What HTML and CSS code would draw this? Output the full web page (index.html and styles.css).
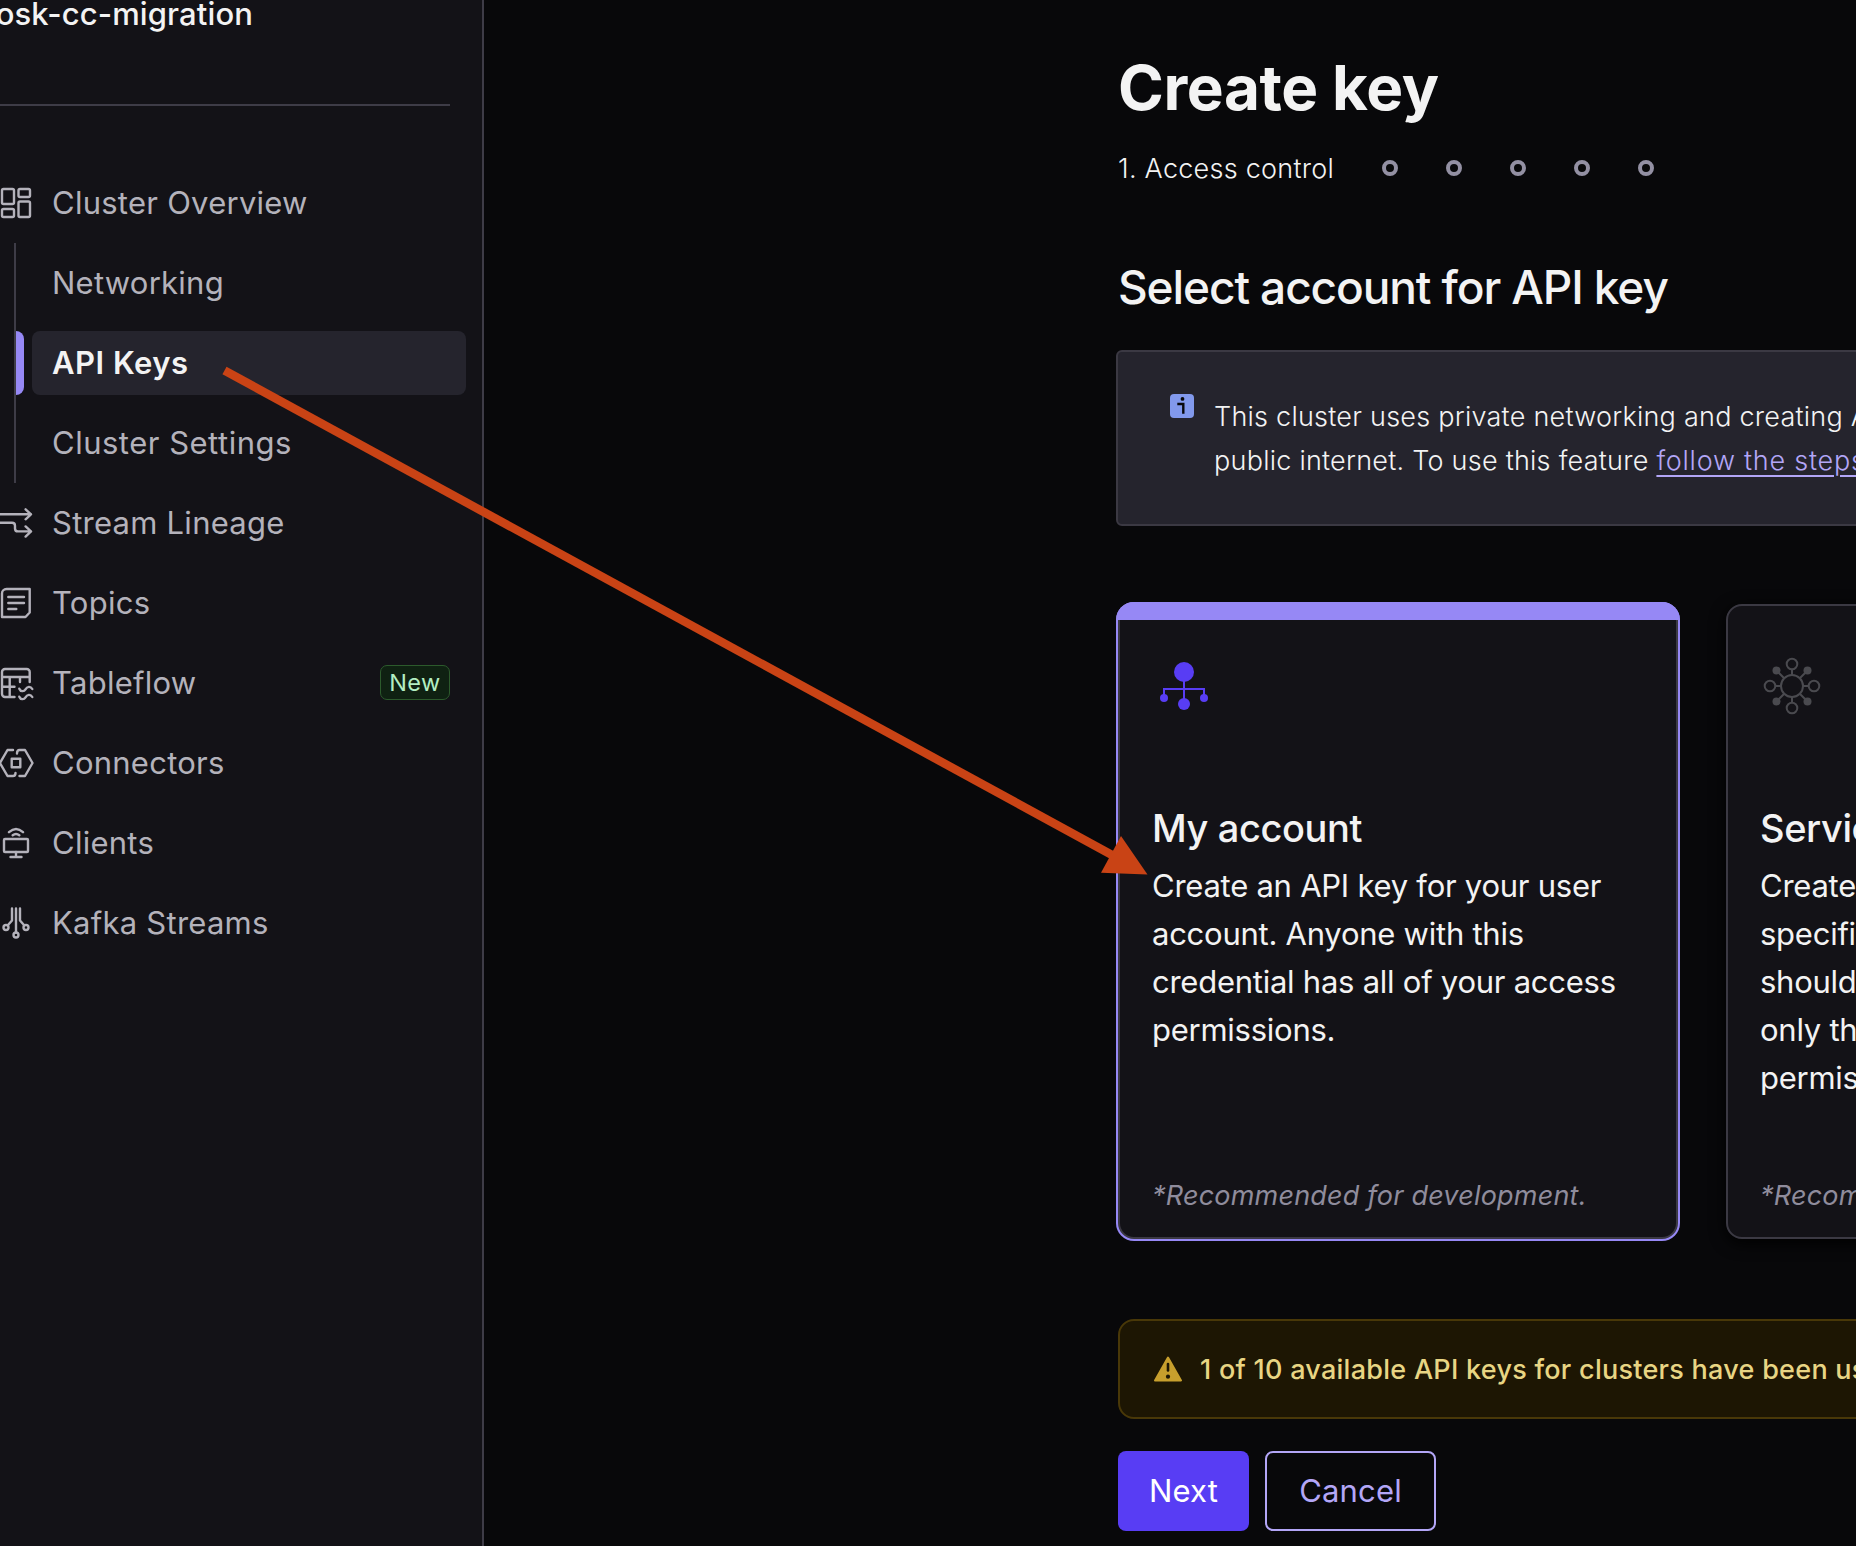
FILE: index.html
```
<!DOCTYPE html>
<html lang="en">
<head>
<meta charset="utf-8">
<title>Create key</title>
<link rel="stylesheet" href="styles.css">
</head>
<body>
<div class="app">
  <aside class="sidebar">
    <div class="cluster-name">osk-cc-migration</div>
    <hr class="divider">
    <nav class="nav">
      <a class="nav-item">
        <svg class="icon" viewBox="0 0 36 36"><rect x="4" y="4" width="12" height="15" rx="1.5"/><rect x="20.500" y="4" width="11.500" height="8" rx="1.5"/><rect x="4" y="24" width="12" height="8" rx="1.5"/><rect x="20.500" y="16.500" width="11.500" height="15.500" rx="1.5"/></svg>
        <span>Cluster Overview</span>
      </a>
      <div class="subnav">
        <a class="sub-item">Networking</a>
        <a class="sub-item active">API Keys</a>
        <a class="sub-item wide">Cluster Settings</a>
      </div>
      <a class="nav-item">
        <svg class="icon" viewBox="0 0 36 36"><path d="M0 9.300H33M27.600 4.300 33 9.300 27.600 14.300M0 17.700H14q3 0 3 3v2.700q0 3 3 3h13M27.600 21.400 33 26.400 27.600 31.600"/></svg>
        <span>Stream Lineage</span>
      </a>
      <a class="nav-item">
        <svg class="icon" viewBox="0 0 36 36"><path d="M8.500 4H31.700v23.500L27.500 32H4V8.500A4.500 4.500 0 0 1 8.500 4zM10.300 12H26M10.300 18H26M10.300 24h8"/></svg>
        <span>Topics</span>
      </a>
      <a class="nav-item">
        <svg class="icon" viewBox="0 0 36 36"><path d="M16.500 32H7a3 3 0 0 1-3-3V7a3 3 0 0 1 3-3h21.700a3 3 0 0 1 3 3v10M4 12h27.700M4 21.700h12.500M11.700 12V32M22 12v5M21.300 23.700c1.200 3 4.600 3.300 6.200.6s4.900-3.600 6.800-.3M21.300 31.700c1.200 3 4.600 3.300 6.200.6s4.900-3.600 6.800-.3"/></svg>
        <span>Tableflow</span>
        <span class="badge">New</span>
      </a>
      <a class="nav-item">
        <svg class="icon" viewBox="0 0 36 36"><path d="M15 5H9.500L2 18l7.500 13H15q2.500 0 2.500-3M19 8.500Q19 5 21.500 5h5.500L34.500 18 27 31h-5.500"/><rect x="13.700" y="13.700" width="8.600" height="8.600"/></svg>
        <span>Connectors</span>
      </a>
      <a class="nav-item">
        <svg class="icon" viewBox="0 0 36 36"><rect x="6" y="14" width="24" height="13" rx="1"/><path d="M18 27v5M12.500 32h11M11 7.200q7-6.500 14 0M14.700 10.300q3.300-2.600 6.600 0"/></svg>
        <span>Clients</span>
      </a>
      <a class="nav-item">
        <svg class="icon" viewBox="0 0 36 36"><path d="M18 3.500v24M14 3.500v12L9.800 20.300M22 3.500v12l4.200 4.800"/><circle cx="8" cy="22.500" r="2.500"/><circle cx="28" cy="22.500" r="2.500"/><circle cx="18" cy="30" r="2.500"/></svg>
        <span>Kafka Streams</span>
      </a>
    </nav>
  </aside>

  <main class="main">
    <h1 class="title">Create key</h1>
    <div class="steps">
      <span class="step-label">1. Access control</span>
      <span class="dots"><i></i><i></i><i></i><i></i><i></i></span>
    </div>
    <h2 class="subtitle">Select account for API key</h2>

    <div class="info">
      <svg class="info-icon" viewBox="0 0 24 24"><rect width="24" height="24" rx="4" fill="#8299ec"/><circle cx="12.500" cy="4.900" r="1.900" fill="#08080a"/><path d="M7.300 10h6v9.700" fill="none" stroke="#08080a" stroke-width="2.400"/></svg>
      <p>This cluster uses private networking and creating API keys<br>public internet. To use this feature <a class="link">follow the steps</a></p>
    </div>

    <div class="cards">
      <section class="card selected">
        <svg class="card-icon" viewBox="0 0 64 64"><g fill="#583df4"><circle cx="32" cy="18" r="10"/><circle cx="12" cy="44" r="4"/><circle cx="52" cy="44" r="4"/><circle cx="32" cy="50" r="6"/></g><path d="M32 18v32M12 44V35H52v9" fill="none" stroke="#583df4" stroke-width="2"/></svg>
        <h3>My account</h3>
        <p class="desc">Create an API key for your user<br>account. Anyone with this<br>credential has all of your access<br>permissions.</p>
        <p class="note">*Recommended for development.</p>
      </section>
      <section class="card">
        <svg class="card-icon" viewBox="0 0 64 64"><g fill="none" stroke="#4a4a4f" stroke-width="2"><circle cx="32" cy="32" r="11"/><circle cx="32" cy="10" r="5.300"/><circle cx="32" cy="54" r="5.300"/><circle cx="10" cy="32" r="5.300"/><circle cx="54" cy="32" r="5.300"/><path d="M32 15.300V21M32 43v5.700M15.300 32H21M43 32h5.700M16.500 16.500l7.700 7.700M39.800 39.800l7.700 7.700M47.500 16.500l-7.700 7.700M24.200 39.800l-7.700 7.700"/></g><g fill="#4a4a4f"><circle cx="16.500" cy="16.500" r="4"/><circle cx="47.500" cy="16.500" r="4"/><circle cx="16.500" cy="47.500" r="4"/><circle cx="47.500" cy="47.500" r="4"/></g></svg>
        <h3>Service account</h3>
        <p class="desc">Create an API key for a<br>specific service<br>should have<br>only the<br>permissions</p>
        <p class="note">*Recommended for production.</p>
      </section>
    </div>

    <div class="warning">
      <svg class="warning-icon" viewBox="0 0 28 26"><path d="M14 1.500 27 24.500H1z" fill="#c79f2d" stroke="#c79f2d" stroke-width="2" stroke-linejoin="round"/><path d="M14 8v6.500" stroke="#1d1603" stroke-width="2.600" stroke-linecap="round"/><circle cx="14" cy="20.700" r="2.100" fill="#1d1603"/></svg>
      <span>1 of 10 available API keys for clusters have been used</span>
    </div>

    <div class="actions">
      <button class="btn primary">Next</button>
      <button class="btn secondary">Cancel</button>
    </div>
  </main>

  <svg class="arrow" viewBox="0 0 1856 1546"><path d="M224.500 370.500 1112 855" stroke="#c94315" stroke-width="8.500"/><path d="M1121 836 1147.500 874.500 1101 872.700z" fill="#c94315"/></svg>
</div>
</body>
</html>
```
FILE: styles.css
```
* { box-sizing: border-box; }

body {
  margin: 0;
  overflow: hidden;
  background: #08080a;
  color: #f3f3f3;
  font-family: Inter, "Liberation Sans", sans-serif;
}

h1, h2, h3, p { margin: 0; }

.app {
  position: relative;
  display: flex;
  width: 1856px;
  height: 1546px;
  overflow: hidden;
}

/* Sidebar */
.sidebar {
  flex: none;
  width: 484px;
  background: #131217;
  border-right: 2px solid #3e3c47;
}

.cluster-name {
  display: flex;
  width: 253px;
  height: 28px;
  justify-content: flex-end;
  font-size: 31px;
  font-weight: 500;
  line-height: 28px;
  letter-spacing: 0.12px;
  white-space: nowrap;
}

.divider {
  width: 450px;
  height: 2px;
  margin: 76px 0 57px;
  border: 0;
  background: #3e3c47;
}

.nav { color: #b4b2bb; font-size: 31px; letter-spacing: 0.25px; }

.nav-item { display: flex; align-items: center; height: 80px; padding: 0 32px 0 0; }
.nav-item span { margin-bottom: 2px; }

.icon {
  width: 36px;
  height: 36px;
  margin: 0 18px 0 -2px;
  fill: none;
  stroke: currentColor;
  stroke-width: 2.4;
  stroke-linecap: round;
  stroke-linejoin: round;
}

.badge {
  width: 70px;
  height: 35px;
  margin-left: auto;
  border: 1px solid #2c5a2c;
  border-radius: 7px;
  background: #0f2112;
  color: #b3eec2;
  font-size: 23.5px;
  line-height: 33px;
  letter-spacing: 0.5px;
  text-align: center;
}

.subnav {
  display: flex;
  flex-direction: column;
  gap: 16px;
  height: 240px;
  margin-left: 14px;
  padding: 8px 16px;
  border-left: 2px solid #3e3c47;
}

.sub-item { display: flex; align-items: center; height: 64px; padding: 0 0 2px 20px; border-radius: 8px; }
.wide { letter-spacing: 0.5px; }

.active {
  position: relative;
  background: #25242d;
  color: #f3f3f3;
  font-weight: 600;
  letter-spacing: 0.5px;
}

.active::before {
  content: "";
  position: absolute;
  top: 0;
  left: -16px;
  width: 8px;
  height: 64px;
  border-radius: 0 8px 8px 0;
  background: #9688f5;
}

/* Main column */
.main { width: 1372px; flex: none; padding: 52px 0 0 634px; }

.title { font-size: 62px; font-weight: 700; line-height: 72px; letter-spacing: -0.4px; }

.steps { display: flex; align-items: center; height: 40px; margin-top: 24px; }
.step-label { width: 264px; font-size: 27px; font-weight: 300; letter-spacing: 0.25px; }
.dots { display: flex; gap: 48px; }
.dots i { width: 16px; height: 16px; border: 4px solid #9390a3; border-radius: 50%; }

.subtitle { margin-top: 71px; font-size: 46px; font-weight: 500; line-height: 56px; letter-spacing: -1.1px; }

.info {
  display: flex;
  width: 1168px;
  height: 176px;
  margin: 35px 0 0 -2px;
  padding: 42px 52px;
  border: 2px solid #3b3943;
  border-radius: 6px;
  background: #25242d;
  font-size: 27px;
  font-weight: 300;
  line-height: 44px;
  letter-spacing: 0.24px;
  white-space: nowrap;
}

.info-icon { flex: none; width: 24px; height: 24px; margin-right: 20px; }
.info p { padding-top: 1px; }

.link {
  color: #b3a6f7;
  letter-spacing: 0.75px;
  text-decoration: underline;
  text-decoration-thickness: 2px;
  text-underline-offset: 5px;
}

.cards { display: flex; gap: 48px; margin-top: 78px; }

.card {
  position: relative;
  display: flex;
  flex: none;
  flex-direction: column;
  width: 560px;
  height: 635px;
  padding: 48px 32px 19px;
  border: 2px solid #3b3943;
  border-radius: 16px;
  background: #131217;
  box-shadow: 0 4px 16px #000;
  white-space: nowrap;
}

.selected { box-shadow: 0 0 0 2px #9688f5; }

.selected::before {
  content: "";
  position: absolute;
  inset: -4px -4px auto;
  height: 18px;
  border-radius: 18px 18px 0 0;
  background: #9688f5;
}

.card-icon { width: 64px; height: 64px; }
.card h3 { margin: 84px 0 0; font-size: 38px; font-weight: 500; line-height: 52px; letter-spacing: -0.39px; }
.desc { margin-top: 8px; font-size: 31px; line-height: 48px; letter-spacing: -0.25px; }
.note { margin-top: auto; color: #8f8c9c; font-size: 27px; font-style: italic; line-height: 44px; letter-spacing: 0.2px; }

.warning {
  display: flex;
  align-items: center;
  width: 1168px;
  height: 100px;
  margin-top: 80px;
  padding: 0 34px;
  border: 2px solid #493808;
  border-radius: 16px;
  background: #1d1603;
  color: #e8d583;
  font-size: 27px;
  font-weight: 500;
  letter-spacing: 0.27px;
  white-space: nowrap;
}

.warning-icon { flex: none; width: 28px; height: 26px; margin-right: 18px; }

.actions { display: flex; gap: 16px; margin-top: 32px; }

.btn {
  height: 80px;
  padding: 0 0 2px;
  border: 0;
  border-radius: 8px;
  font: 400 31px Inter, "Liberation Sans", sans-serif;
  letter-spacing: 0.17px;
}

.primary { width: 131px; background: #583df4; color: #fff; }
.secondary { width: 171px; border: 2px solid #b3a6f7; background: none; color: #b3a6f7; }

/* Annotation drawn over both columns */
.arrow { position: absolute; inset: 0; width: 1856px; height: 1546px; pointer-events: none; }
```
